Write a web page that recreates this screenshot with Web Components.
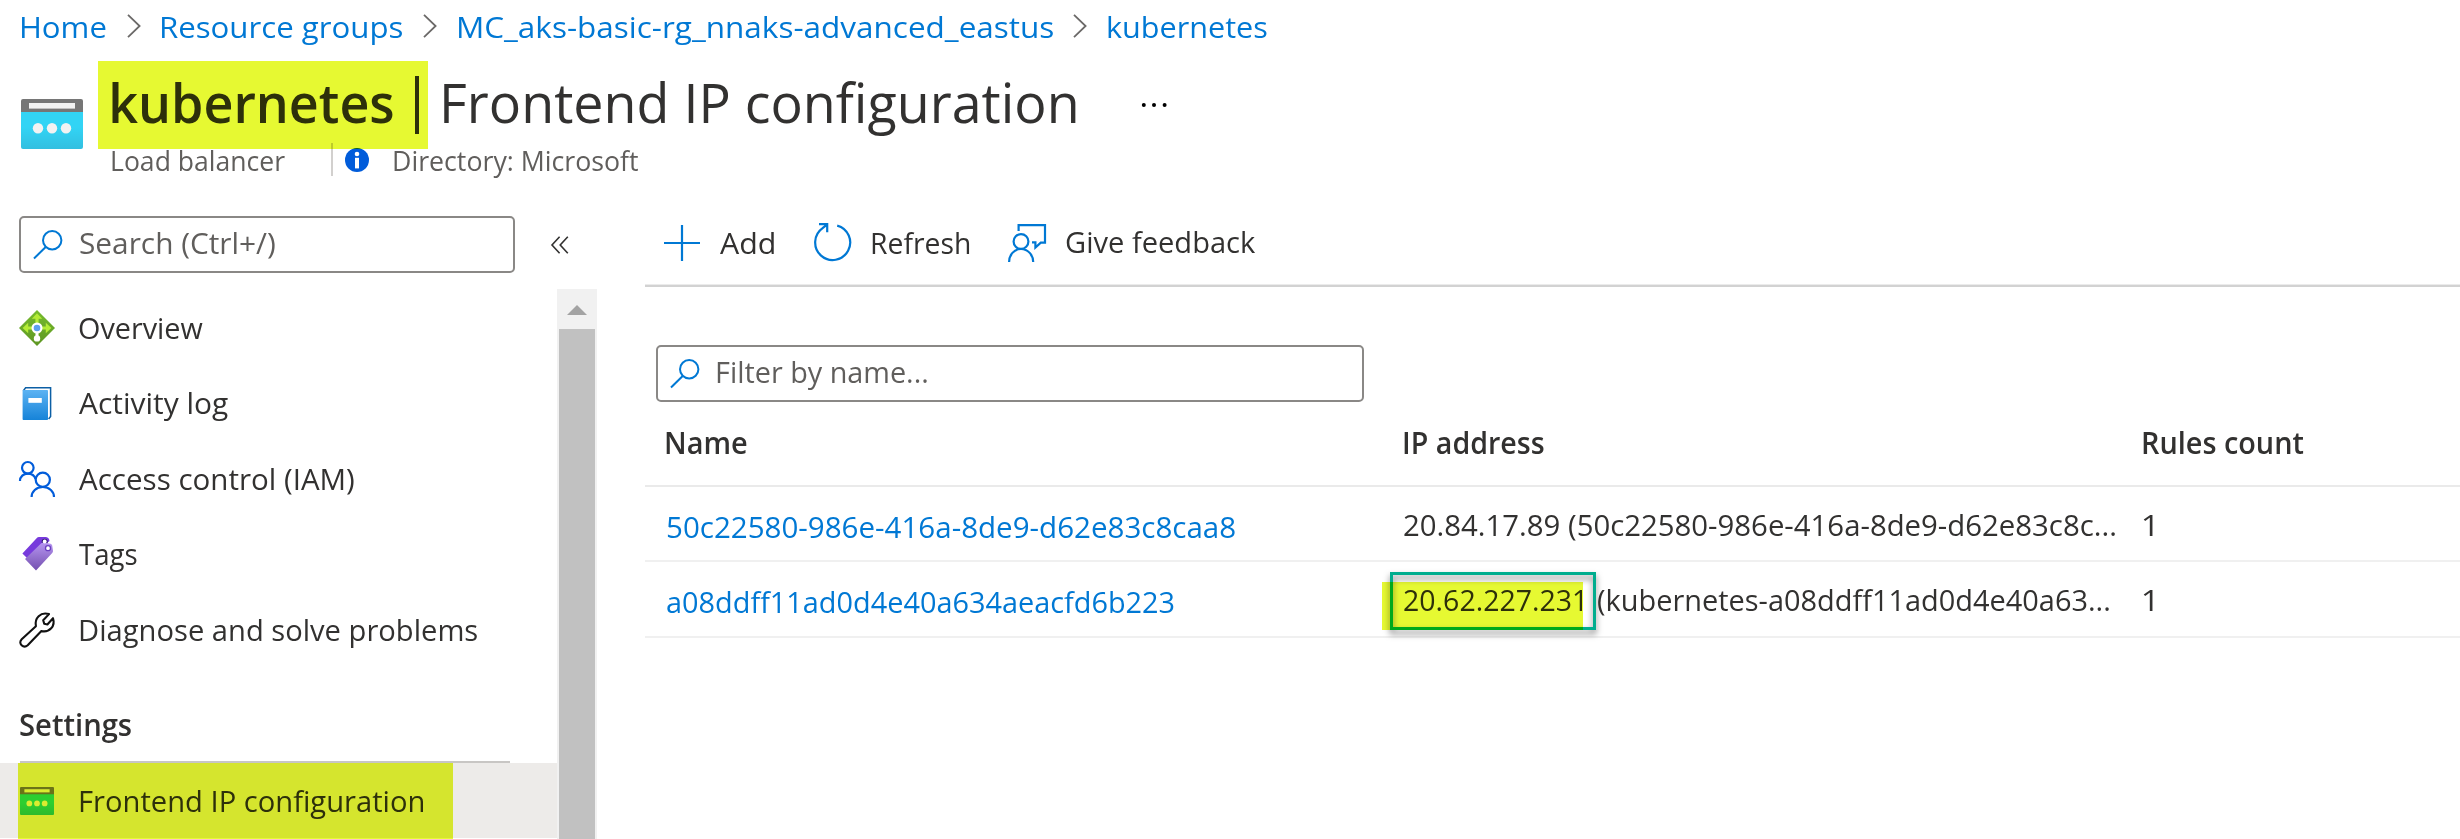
<!DOCTYPE html>
<html lang="en">
<head>
<meta charset="utf-8">
<title>kubernetes | Frontend IP configuration</title>
<style>
html{background:#fff}
body{margin:0;width:2460px;height:839px;overflow:hidden;background:#fff;color:#323130;font-family:"Open Sans","Noto Sans",sans-serif}
</style>
</head>
<body>
<portal-page></portal-page>
<script>
const FONT = '"Open Sans","Noto Sans",sans-serif';
const LINK = '#0078d4';
const pen = document.createElement('canvas').getContext('2d');

/* One line of text, condensed or widened so that its ink is exactly w pixels wide. */
class FitText extends HTMLElement {
  connectedCallback() {
    const text = this.textContent, w = +this.getAttribute('w');
    const size = this.getAttribute('size') || 30, weight = this.getAttribute('weight') || 400;
    pen.font = `${weight} ${size}px ${FONT}`;
    const m = pen.measureText(text);
    const k = w / (m.actualBoundingBoxLeft + m.actualBoundingBoxRight);
    this.attachShadow({mode: 'open'}).innerHTML = `<style>
      :host{display:block;flex:none;width:${w}px;height:1.4em;font:${weight} ${size}px/1.4 ${FONT};white-space:nowrap}
      span{display:inline-block;transform-origin:0 0;transform:translateX(${m.actualBoundingBoxLeft * k}px) scaleX(${k})}
    </style><span><slot></slot></span>`;
  }
}

const lens = '<circle cx="19.2" cy="10.3" r="9.2"/><path d="M12.7 17L1 28.5"/>';
const balancer = '<defs><linearGradient id="g" x2="0" y2="1"><stop offset=".5" stop-color="#32d4f5"/><stop offset="1" stop-color="#32bfe0"/></linearGradient></defs><rect y="6" width="62" height="44" rx="2" fill="url(#g)"/><path d="M0 13V2Q0 0 2 0H60Q62 0 62 2V13Z" fill="#767676"/><rect x="8" y="4" width="46" height="5.6" fill="#f2f2f2"/><g fill="#f2f2f2"><circle cx="17" cy="29.3" r="5.2"/><circle cx="31" cy="29.3" r="5.2"/><circle cx="45" cy="29.3" r="5.2"/></g>';
const ICONS = {
  balancer: [62, 50, balancer],
  balancerSmall: [34, 28, balancer, '0 0 62 50'],
  chevron: [14, 24, '<path d="M1 .8L12.6 12L1 23.2" fill="none" stroke="#6b6968" stroke-width="1.8"/>'],
  more: [27, 6, '<circle cx="2.8" cy="3" r="2"/><circle cx="13" cy="3" r="2"/><circle cx="23.6" cy="3" r="2"/>'],
  info: [24, 24, '<circle cx="12" cy="12" r="12" fill="#015cda"/><circle cx="12" cy="6" r="2.3" fill="#fff"/><rect x="10" y="9.8" width="4" height="10.6" fill="#fff"/>'],
  lens: [30, 30, `<g fill="none" stroke="#0078d4" stroke-width="2">${lens}</g>`],
  collapse: [18, 18, '<path d="M8.6 .8L1 9L8.6 17.2M16.8 .8L9.2 9L16.8 17.2" fill="none" stroke="#323130" stroke-width="1.6"/>'],
  add: [36, 36, '<path d="M18 0V36M0 18H36" stroke="#0078d4" stroke-width="2.2"/>'],
  refresh: [38, 39, '<path d="M23.2 2.6A17.5 17.5 0 1 1 8.6 5.2L13 1.6M5 1.2H13.2V9.2" fill="none" stroke="#0078d4" stroke-width="2.2"/>'],
  feedback: [39, 38, '<g fill="none" stroke="#0078d4" stroke-width="2.2"><circle cx="13" cy="17.5" r="7.4"/><path d="M1.1 38C1.1 31 6 25 13 25S25.2 31 25.2 38M10.6 7V1.1H37V18.6H32.8L27.4 23.6V18.3H24"/></g>'],
  overview: [36, 36, '<defs><linearGradient id="g" x2="0" y2="1"><stop stop-color="#76bc2d"/><stop offset="1" stop-color="#5e9624"/></linearGradient></defs><path d="M18 0L36 18L18 36L0 18Z" fill="url(#g)"/><g fill="#b4ec36"><path d="M18 3.2L23.2 8.8H19.6V14H16.4V8.8H12.8Z"/><path d="M3.6 18L9.2 12.8V16.4H14V19.6H9.2V23.2Z"/><path d="M32.4 18L26.8 12.8V16.4H22V19.6H26.8V23.2Z"/></g><rect x="16.5" y="20" width="3" height="8" fill="#fff"/><circle cx="18" cy="28.4" r="3.2" fill="#fff"/><circle cx="18" cy="18" r="5.5" fill="#fff"/><circle cx="18" cy="18" r="3.3" fill="#5ea0ef"/>'],
  log: [30, 35, '<defs><linearGradient id="g" x2="0" y2="1"><stop stop-color="#5cb3f3"/><stop offset="1" stop-color="#1683d8"/></linearGradient></defs><path d="M1.2 5L3.6 1.8H28.6V30.6L26.6 33" fill="none" stroke="#0c5fa5" stroke-width="1.5"/><rect x=".6" y="4" width="25.4" height="30" rx=".8" fill="url(#g)"/><rect x="6.4" y="12" width="13.4" height="4.8" fill="#fff"/>'],
  iam: [36, 36, '<g fill="none" stroke="#015cda" stroke-width="2.2"><circle cx="8.8" cy="6.8" r="5.8"/><circle cx="23.8" cy="18.8" r="7.1"/><path d="M1 20C1 15.500 4.500 12.600 8.800 12.600C12.600 12.600 15.600 14.800 16.500 18M12.600 36C12.600 30.500 17.200 26 23.800 26S35 30.500 35 36"/></g>'],
  tags: [31, 34, '<defs><linearGradient id="g" x2="0" y2="1"><stop stop-color="#b796f1"/><stop offset="1" stop-color="#734faf"/></linearGradient></defs><path d="M.4 16.400L14.600 1.200Q15.600 0 17 0H24Q27.200 .6 27.500 4L5 21Z" fill="#773adc"/><circle cx="22.700" cy="4.800" r="2.300" fill="#fff" stroke="#321a73" stroke-width="1.500"/><path d="M3 22L19 6.400Q20.500 5.300 22 5.600L28.600 6.800Q30 7.200 30.200 8.600L31 14Q31 15 30.200 16L14 33.500Z" fill="url(#g)"/><circle cx="22.700" cy="4.500" r="1.900" fill="#fff"/><circle cx="26" cy="11.200" r="2.500" fill="#fff" stroke="#6b3fc0" stroke-width="1.300"/>'],
  wrench: [36, 36, '<path d="M2.700 27.200L16.900 14.200C15.300 6.200 21.500 -.4 30 2.100L24.200 8.200L25.200 11.800L28.400 12.500L34 6.200C36.600 14.200 30.500 20.800 22.400 19.100L8.700 33.200C4.600 37 -1.500 31.400 2.700 27.200Z" fill="none" stroke="#111" stroke-width="2.100" stroke-linejoin="round"/>']
};
class PortalIcon extends HTMLElement {
  connectedCallback() {
    const [w, h, body, box] = ICONS[this.getAttribute('name')];
    this.attachShadow({mode: 'open'}).innerHTML = `<style>:host{display:block;flex:none;width:${w}px;height:${h}px}svg{display:block;overflow:visible}</style>
      <svg width="${w}" height="${h}" viewBox="${box || `0 0 ${w} ${h}`}" preserveAspectRatio="none">${body}</svg>`;
  }
}

/* Highlighter stroke laid over content. */
class HighlightMark extends HTMLElement {
  connectedCallback() {
    this.attachShadow({mode: 'open'}).innerHTML = `<style>:host{position:absolute;background:#e6f932;mix-blend-mode:multiply;pointer-events:none}</style>`;
  }
}

class CrumbTrail extends HTMLElement {
  connectedCallback() {
    this.attachShadow({mode: 'open'}).innerHTML = `<style>
      :host{display:flex;align-items:center;height:54px;padding:0 0 1px 21.200px;gap:20.600px;color:${LINK}}
      portal-icon{margin-top:-2px}</style>
      <fit-text w="85">Home</fit-text><portal-icon name="chevron"></portal-icon>
      <fit-text w="241">Resource groups</fit-text><portal-icon name="chevron"></portal-icon>
      <fit-text w="595">MC_aks-basic-rg_nnaks-advanced_eastus</fit-text><portal-icon name="chevron"></portal-icon>
      <fit-text w="158.500">kubernetes</fit-text>`;
  }
}

class BladeHeader extends HTMLElement {
  connectedCallback() {
    this.attachShadow({mode: 'open'}).innerHTML = `<style>
      :host{display:flex;position:relative;height:121px;padding-left:21px;box-sizing:border-box}
      .logo{margin-top:44px}
      .text{margin:6px 0 0 28.700px}
      .title{display:flex;align-items:center;height:80px;padding-bottom:8px}
      .bar{width:3.500px;height:58px;margin:8px 25px 0 22.500px;background:#323130}
      .more{margin:7px 0 0 65px}
      .sub{display:flex;align-items:center;height:33px;margin-top:-6px;color:#605e5c}
      .sub i{width:2px;height:33px;margin:0 11.500px 0 46.500px;background:#d2d0ce}
      .sub .dir{margin-left:25.500px}
      .sub fit-text{margin-top:2px}
      highlight-mark{left:98px;top:6px;width:330px;height:88px}
    </style>
    <portal-icon class="logo" name="balancer"></portal-icon>
    <div class="text">
      <div class="title"><fit-text w="281" size="55" weight="600">kubernetes</fit-text><div class="bar"></div><fit-text w="632" size="55">Frontend IP configuration</fit-text><portal-icon class="more" name="more"></portal-icon></div>
      <div class="sub"><fit-text w="173" size="27">Load balancer</fit-text><i></i><portal-icon name="info"></portal-icon><fit-text class="dir" w="244" size="27">Directory: Microsoft</fit-text></div>
    </div>
    <highlight-mark></highlight-mark>`;
  }
}

class SearchField extends HTMLElement {
  connectedCallback() {
    this.attachShadow({mode: 'open'}).innerHTML = `<style>
      :host{display:flex;align-items:center;box-sizing:border-box;height:57px;border:2px solid #8a8886;border-radius:5px;padding-left:12px;gap:16.500px;color:#605e5c}
      ::slotted(*){margin-top:-3px}
    </style><portal-icon name="lens"></portal-icon><slot></slot>`;
  }
}

class NavItem extends HTMLElement {
  connectedCallback() {
    this.attachShadow({mode: 'open'}).innerHTML = `<style>
      :host{display:flex;align-items:center;position:relative;height:75.500px;padding-left:19px}
      :host([selected]){height:75px;background:#edebe9}
      .slot{display:flex;justify-content:center;width:36px;margin-right:24px}
      highlight-mark{left:18px;top:0;width:435px;height:76px}
    </style><div class="slot"><portal-icon name="${this.getAttribute('icon')}"></portal-icon></div><slot></slot>
    ${this.hasAttribute('selected') ? '<highlight-mark></highlight-mark>' : ''}`;
  }
}

class SideNav extends HTMLElement {
  connectedCallback() {
    this.attachShadow({mode: 'open'}).innerHTML = `<style>
      :host{display:flex;flex-direction:column;width:597px;flex:none}
      .find{display:flex;align-items:center;gap:36px;padding:40px 0 16px 19px}
      .find search-field{width:496px}
      .area{display:flex;flex:1;min-height:0;overflow:hidden}
      nav{width:557px;flex:none;padding-top:1px;box-sizing:border-box}
      .wide{margin-left:1px}
      .group{display:flex;flex-direction:column;justify-content:flex-end;height:95.500px;margin-left:20px;width:490px;border-bottom:2px solid #c8c6c4;box-sizing:border-box;padding-bottom:15.500px}
      .bar{width:40px;background:#f1f1f1;display:flex;flex-direction:column;align-items:center}
      .up{margin-top:16px;border:10px solid transparent;border-top:0;border-bottom:10px solid #a3a3a3}
      .thumb{margin-top:14px;width:36px;flex:1;background:#c1c1c1}
    </style>
    <div class="find"><search-field><fit-text w="195">Search (Ctrl+/)</fit-text></search-field><portal-icon name="collapse"></portal-icon></div>
    <div class="area"><nav>
      <nav-item icon="overview"><fit-text w="123.500">Overview</fit-text></nav-item>
      <nav-item icon="log"><fit-text w="149">Activity log</fit-text></nav-item>
      <nav-item icon="iam"><fit-text w="275">Access control (IAM)</fit-text></nav-item>
      <nav-item icon="tags"><fit-text w="57.500">Tags</fit-text></nav-item>
      <nav-item icon="wrench"><fit-text class="wide" w="397">Diagnose and solve problems</fit-text></nav-item>
      <div class="group"><fit-text w="111.500" weight="600">Settings</fit-text></div>
      <nav-item icon="balancerSmall" selected><fit-text class="wide" w="343">Frontend IP configuration</fit-text></nav-item>
    </nav><div class="bar"><div class="up"></div><div class="thumb"></div></div></div>`;
  }
}

class CommandBar extends HTMLElement {
  connectedCallback() {
    this.attachShadow({mode: 'open'}).innerHTML = `<style>
      :host{display:flex;align-items:center;height:85px;padding:24px 0 0 19px;border-bottom:2px solid #d2d2d2;box-shadow:inset 0 -1px #ebebeb}
      .a{margin:0 39.500px 0 20.200px}.r{margin:0 38.500px 0 20.500px}.f{margin-left:19.500px}
      fit-text{margin-top:-1px}
    </style>
    <portal-icon name="add"></portal-icon><fit-text class="a" w="54">Add</fit-text>
    <portal-icon name="refresh"></portal-icon><fit-text class="r" w="97">Refresh</fit-text>
    <portal-icon name="feedback"></portal-icon><fit-text class="f" w="189.500">Give feedback</fit-text>`;
  }
}

class IpTable extends HTMLElement {
  connectedCallback() {
    this.attachShadow({mode: 'open'}).innerHTML = `<style>
      :host{display:block}
      .row{display:grid;grid-template-columns:759px 739px 1fr;height:73px;border-bottom:2px solid #f0f0f0}
      .row.last{height:74px}
      .row.head{height:83px;border-color:#eaeaea}
      .row>div{display:flex;align-items:center;position:relative;padding-top:2px}
      .row.head>div{padding:0 0 2px}
      .row>.name{padding:6px 0 0 22px;color:${LINK}}
      .row.head>.name{padding:0 0 2px 21px;color:inherit}
      .frame{position:absolute;left:-14px;top:10px;width:206px;height:58px;box-sizing:border-box;border:3px solid #00ad8e;filter:drop-shadow(0 4px 3px rgba(0,0,0,.5))}
      .rest{margin-left:15px}
      highlight-mark{left:-22px;top:20px;width:201px;height:48px}
    </style>
    <div class="row head"><div class="name"><fit-text w="80.500" weight="600">Name</fit-text></div><div><fit-text w="140" weight="600">IP address</fit-text></div><div><fit-text w="161" weight="600">Rules count</fit-text></div></div>
    <div class="row"><div class="name"><fit-text w="568">50c22580-986e-416a-8de9-d62e83c8caa8</fit-text></div><div><fit-text w="711">20.84.17.89 (50c22580-986e-416a-8de9-d62e83c8c...</fit-text></div><div><fit-text w="10">1</fit-text></div></div>
    <div class="row last"><div class="name"><fit-text w="507">a08ddff11ad0d4e40a634aeacfd6b223</fit-text></div><div><div class="frame"></div><fit-text w="178.500">20.62.227.231</fit-text><fit-text class="rest" w="511">(kubernetes-a08ddff11ad0d4e40a63...</fit-text><highlight-mark></highlight-mark></div><div><fit-text w="10">1</fit-text></div></div>`;
  }
}

class PortalPage extends HTMLElement {
  connectedCallback() {
    this.attachShadow({mode: 'open'}).innerHTML = `<style>
      :host{display:flex;flex-direction:column;width:2460px;height:839px;overflow:hidden;background:#fff}
      .body{display:flex;gap:48px;flex:1;min-height:0}
      main{flex:1;min-width:0}
      .filter{margin:58px 0 0 11px;width:708px}
    </style>
    <crumb-trail></crumb-trail><blade-header></blade-header>
    <div class="body"><side-nav></side-nav><main><command-bar></command-bar>
      <search-field class="filter"><fit-text w="210">Filter by name...</fit-text></search-field>
      <ip-table></ip-table></main></div>`;
  }
}

customElements.define('fit-text', FitText);
customElements.define('portal-icon', PortalIcon);
customElements.define('highlight-mark', HighlightMark);
customElements.define('crumb-trail', CrumbTrail);
customElements.define('blade-header', BladeHeader);
customElements.define('search-field', SearchField);
customElements.define('nav-item', NavItem);
customElements.define('side-nav', SideNav);
customElements.define('command-bar', CommandBar);
customElements.define('ip-table', IpTable);
customElements.define('portal-page', PortalPage);
</script>
</body>
</html>
